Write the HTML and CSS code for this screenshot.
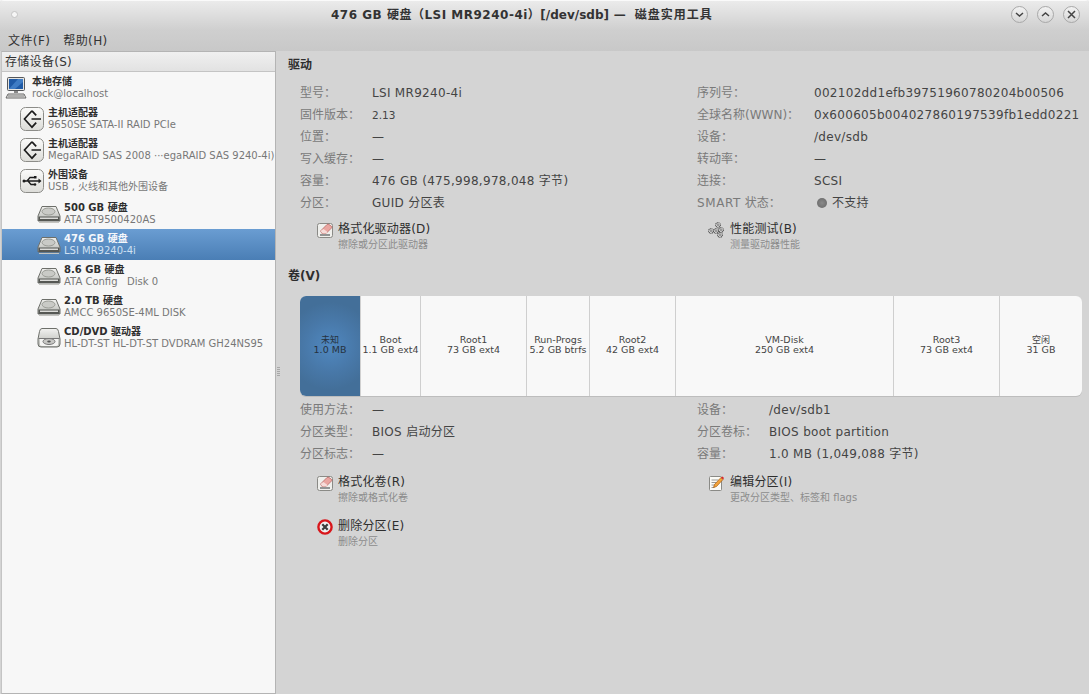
FILE: index.html
```html
<!DOCTYPE html>
<html lang="zh-CN">
<head>
    <meta charset="UTF-8">
    <title>磁盘实用工具</title>
    <link rel="stylesheet" href="styles.css">
</head>
<body>
    <svg class="defs" width="0" height="0">
        <defs>
            <linearGradient id="hdTop" x1="0" y1="0" x2="0" y2="1">
                <stop offset="0" stop-color="#f2f2f0"/>
                <stop offset="1" stop-color="#b4b6b1"/>
            </linearGradient>
            <linearGradient id="chipBg" x1="0" y1="0" x2="0" y2="1">
                <stop offset="0" stop-color="#fbfbfa"/>
                <stop offset="1" stop-color="#dcdcd8"/>
            </linearGradient>
            <symbol id="hdd" viewBox="0 0 24 20">
                <path d="M5 2.500h14l4 9.500v5H1v-5z" fill="url(#hdTop)" stroke="#6d6f6a"/>
                <ellipse cx="11.500" cy="7.500" rx="6.500" ry="3.500" fill="#c9cac6" stroke="#9a9c96"/>
                <rect x="1.500" y="12.500" width="21" height="4.500" fill="#555753"/>
                <rect x="3" y="13.500" width="18" height="1.500" fill="#dcdcd9"/>
                <path d="M2 18.500h20" stroke="#c4c4c0"/>
            </symbol>
            <symbol id="optical" viewBox="0 0 24 24">
                <path d="M5 2.500h14q2 0 2.500 3L23 13v5q0 3-3 3H4q-3 0-3-3v-5l1.500-7.500Q3 2.500 5 2.500z" fill="url(#hdTop)" stroke="#6d6f6a"/>
                <path d="M1.500 12.500h21" stroke="#777"/>
                <path d="M3 13h18v6q0 1-2 1H5q-2 0-2-1z" fill="#f4f4f2"/>
                <ellipse cx="12" cy="15.500" rx="6" ry="3" fill="#c8c8c5" stroke="#777"/>
                <ellipse cx="12" cy="15.500" rx="1.800" ry="1" fill="#555"/>
            </symbol>
            <symbol id="hba" viewBox="0 0 24 24">
                <rect x=".5" y=".5" width="23" height="23" rx="5" fill="url(#chipBg)" stroke="#8c8c88"/>
                <path d="M12 3.800 4.500 12l7.500 8.200 4.200-4.500M16.200 8.300 12 3.800" fill="none" stroke="#1c1c1c" stroke-width="1.700"/>
                <path d="M11.500 12H21" stroke="#1c1c1c" stroke-width="1.700"/>
            </symbol>
            <symbol id="usb" viewBox="0 0 24 24">
                <rect x=".5" y=".5" width="23" height="23" rx="5" fill="url(#chipBg)" stroke="#8c8c88"/>
                <path d="M3 12h17M7 12l3-3.500h4M8 12l3 3.500h3" fill="none" stroke="#1c1c1c" stroke-width="1.300"/>
                <circle cx="4" cy="12" r="1.500" fill="#1c1c1c"/>
                <path d="M18.500 9.500l3 2.500-3 2.500z" fill="#1c1c1c"/>
                <rect x="14" y="7" width="2.500" height="2.500" fill="#1c1c1c"/>
                <circle cx="15" cy="15.500" r="1.300" fill="#1c1c1c"/>
            </symbol>
            <symbol id="eraser" viewBox="0 0 16 16">
                <rect x=".5" y="1.500" width="15" height="14" rx="2" fill="#efefec" stroke="#8a8a86"/>
                <path d="M3.500 9 10 2.500q1-.8 2 0l2.500 1.800q.8.800 0 1.700L9 11.500H5z" fill="#eaa5a0" stroke="#b96a66" stroke-width=".8"/>
                <path d="M3.500 9 5.500 11.500H9l1.500-1.500-4-3z" fill="#f6dcd9"/>
                <path d="M3 13h10" stroke="#55575a" stroke-width="1.200"/>
            </symbol>
            <symbol id="gear" viewBox="0 0 6 6">
                <circle cx="3" cy="3" r="2.300" fill="#f2f2f2" stroke="#444" stroke-width="1.100" stroke-dasharray="1 .45"/>
                <circle cx="3" cy="3" r=".9" fill="#d4d4d4" stroke="#444" stroke-width=".5"/>
            </symbol>
        </defs>
    </svg>

    <div class="window">
        <header class="titlebar">
            <span class="app-dot"></span>
            <h1 class="title">476 GB 硬盘（LSI MR9240-4i）<span class="title-path">[/dev/sdb]</span> — <span class="title-app">磁盘实用工具</span></h1>
            <div class="wm-buttons">
                <button class="wm-btn"><svg width="9" height="9" viewBox="0 0 9 9"><path d="M1 3l3.500 3L8 3" fill="none" stroke="#444" stroke-width="1.500"/></svg></button>
                <button class="wm-btn"><svg width="9" height="9" viewBox="0 0 9 9"><path d="M1 6l3.500-3L8 6" fill="none" stroke="#444" stroke-width="1.500"/></svg></button>
                <button class="wm-btn"><svg width="9" height="9" viewBox="0 0 9 9"><path d="M1 1l7 7M8 1 1 8" fill="none" stroke="#444" stroke-width="1.500"/></svg></button>
            </div>
        </header>

        <nav class="menubar">
            <span>文件(F)</span>
            <span>帮助(H)</span>
        </nav>

        <div class="content">
            <aside class="sidebar">
                <div class="sidebar-head">存储设备(S)</div>
                <ul class="tree">
                    <li class="tree-row level-0">
                        <svg class="icon-computer" width="22" height="24" viewBox="0 0 22 24">
                            <rect x="2.500" y="1.500" width="17" height="13" rx="1" fill="#e4e4e2" stroke="#55575a"/>
                            <rect x="4" y="3" width="14" height="10" fill="#1f5aa6"/>
                            <path d="M4 13l9-10h5v3l-8 7z" fill="#3f7cc4"/>
                            <path d="M9 15h4v2H9z" fill="#888"/>
                            <path d="M3 18h16l2 4H1z" fill="#e8e8e6" stroke="#666"/>
                            <path d="M3 20h16" stroke="#777"/>
                        </svg>
                        <div class="tree-text"><strong>本地存储</strong><span>rock@localhost</span></div>
                    </li>
                    <li class="tree-row level-1">
                        <svg class="icon-chip" width="24" height="24"><use href="#hba"/></svg>
                        <div class="tree-text"><strong>主机适配器</strong><span>9650SE SATA-II RAID PCIe</span></div>
                    </li>
                    <li class="tree-row level-1">
                        <svg class="icon-chip" width="24" height="24"><use href="#hba"/></svg>
                        <div class="tree-text"><strong>主机适配器</strong><span>MegaRAID SAS 2008 ···egaRAID SAS 9240-4i)</span></div>
                    </li>
                    <li class="tree-row level-1">
                        <svg class="icon-chip" width="24" height="24"><use href="#usb"/></svg>
                        <div class="tree-text"><strong>外围设备</strong><span>USB , 火线和其他外围设备</span></div>
                    </li>
                    <li class="tree-row level-2 first-drive">
                        <svg class="icon-drive" width="24" height="20"><use href="#hdd"/></svg>
                        <div class="tree-text"><strong>500 GB 硬盘</strong><span>ATA ST9500420AS</span></div>
                    </li>
                    <li class="tree-row level-2 selected">
                        <svg class="icon-drive" width="24" height="20"><use href="#hdd"/></svg>
                        <div class="tree-text"><strong>476 GB 硬盘</strong><span>LSI MR9240-4i</span></div>
                    </li>
                    <li class="tree-row level-2">
                        <svg class="icon-drive" width="24" height="20"><use href="#hdd"/></svg>
                        <div class="tree-text"><strong>8.6 GB 硬盘</strong><span>ATA Config&nbsp;&nbsp; Disk 0</span></div>
                    </li>
                    <li class="tree-row level-2">
                        <svg class="icon-drive" width="24" height="20"><use href="#hdd"/></svg>
                        <div class="tree-text"><strong>2.0 TB 硬盘</strong><span>AMCC 9650SE-4ML DISK</span></div>
                    </li>
                    <li class="tree-row level-2">
                        <svg class="icon-drive" width="24" height="24"><use href="#optical"/></svg>
                        <div class="tree-text"><strong>CD/DVD 驱动器</strong><span>HL-DT-ST HL-DT-ST DVDRAM GH24NS95</span></div>
                    </li>
                </ul>
            </aside>

            <main class="details">
                <span class="sash"></span>
                <h2 class="section-title">驱动</h2>
                <div class="two-col drive-info">
                    <dl class="props">
                        <dt>型号：</dt><dd>LSI MR9240-4i</dd>
                        <dt>固件版本：</dt><dd class="small">2.13</dd>
                        <dt>位置：</dt><dd>—</dd>
                        <dt>写入缓存：</dt><dd>—</dd>
                        <dt>容量：</dt><dd>476 GB (475,998,978,048 字节)</dd>
                        <dt>分区：</dt><dd>GUID 分区表</dd>
                    </dl>
                    <dl class="props props-wide">
                        <dt>序列号：</dt><dd>002102dd1efb39751960780204b00506</dd>
                        <dt>全球名称(WWN)：</dt><dd>0x600605b004027860197539fb1edd0221</dd>
                        <dt>设备：</dt><dd>/dev/sdb</dd>
                        <dt>转动率：</dt><dd>—</dd>
                        <dt>连接：</dt><dd>SCSI</dd>
                        <dt><span class="latin">SMART</span> 状态：</dt><dd class="smart"><i class="smart-dot"></i>不支持</dd>
                    </dl>
                </div>
                <div class="two-col actions drive-actions">
                    <a class="action">
                        <svg width="16" height="16"><use href="#eraser"/></svg>
                        <div><b>格式化驱动器(D)</b><small>擦除或分区此驱动器</small></div>
                    </a>
                    <a class="action action-right">
                        <svg width="16" height="16" viewBox="0 0 16 16">
                            <use href="#gear" x="7" y="0" width="6" height="6"/>
                            <use href="#gear" x="10" y="5" width="6" height="6"/>
                            <use href="#gear" x="0" y="6" width="6" height="6"/>
                            <use href="#gear" x="5" y="6" width="6" height="6"/>
                            <use href="#gear" x="9" y="10" width="6" height="6"/>
                        </svg>
                        <div><b>性能测试(B)</b><small>测量驱动器性能</small></div>
                    </a>
                </div>

                <h2 class="section-title volumes-title">卷(V)</h2>
                <div class="volume-bar">
                    <div class="vol vol-active" style="width:60px"><span class="cjk-small">未知</span><span>1.0 MB</span></div>
                    <div class="vol" style="width:59px"><span>Boot</span><span>1.1 GB ext4</span></div>
                    <div class="vol" style="width:105px"><span>Root1</span><span>73 GB ext4</span></div>
                    <div class="vol" style="width:62px"><span>Run-Progs</span><span>5.2 GB btrfs</span></div>
                    <div class="vol" style="width:85px"><span>Root2</span><span>42 GB ext4</span></div>
                    <div class="vol" style="width:217px"><span>VM-Disk</span><span>250 GB ext4</span></div>
                    <div class="vol" style="width:105px"><span>Root3</span><span>73 GB ext4</span></div>
                    <div class="vol vol-last"><span class="cjk-small">空闲</span><span>31 GB</span></div>
                </div>
                <div class="two-col volume-info">
                    <dl class="props">
                        <dt>使用方法：</dt><dd>—</dd>
                        <dt>分区类型：</dt><dd>BIOS 启动分区</dd>
                        <dt>分区标志：</dt><dd>—</dd>
                    </dl>
                    <dl class="props props-narrow">
                        <dt>设备：</dt><dd>/dev/sdb1</dd>
                        <dt>分区卷标：</dt><dd>BIOS boot partition</dd>
                        <dt>容量：</dt><dd>1.0 MB (1,049,088 字节)</dd>
                    </dl>
                </div>
                <div class="two-col actions volume-actions">
                    <div class="action-stack">
                        <a class="action">
                            <svg width="16" height="16"><use href="#eraser"/></svg>
                            <div><b>格式化卷(R)</b><small>擦除或格式化卷</small></div>
                        </a>
                        <a class="action">
                            <svg width="16" height="16" viewBox="0 0 16 16">
                                <circle cx="8" cy="8" r="6.600" fill="#f0f0f0" stroke="#d8161b" stroke-width="2.400"/>
                                <path d="M5.300 5.300l5.400 5.400M10.700 5.300l-5.400 5.400" stroke="#3c3c3c" stroke-width="2.200"/>
                            </svg>
                            <div><b>删除分区(E)</b><small>删除分区</small></div>
                        </a>
                    </div>
                    <a class="action action-right">
                        <svg width="16" height="16" viewBox="0 0 16 16">
                            <rect x="1.500" y="1.500" width="12" height="14" rx="1" fill="#fbfbf6" stroke="#8a8a86"/>
                            <path d="M3.500 5h7M3.500 7.500h5M3.500 10h4M3.500 12.500h3" stroke="#9a9a96"/>
                            <path d="M5.500 12.500l1-3L13 2.500l2 2-6.500 7z" fill="#f2a33a" stroke="#a85f10" stroke-width=".7"/>
                            <path d="M13 2.500l2 2 1-1.500-1.500-1.500z" fill="#d8262b"/>
                        </svg>
                        <div><b>编辑分区(I)</b><small>更改分区类型、标签和 flags</small></div>
                    </a>
                </div>
            </main>
        </div>
    </div>
</body>
</html>
```

FILE: styles.css
```css
/* Page and window frame */
html, body {
    margin: 0;
    height: 100%;
    overflow: hidden;
    background: #f4f4f4;
}
body {
    font-family: "DejaVu Sans", "Noto Sans CJK SC", sans-serif;
    font-size: 12px;
    color: #3b3b3b;
}
.defs {
    display: block;
    height: 0;
}
.window {
    width: 1089px;
    height: 694px;
    display: flex;
    flex-direction: column;
    background: #d4d4d4;
    border-radius: 4px 4px 0 0;
    overflow: hidden;
}

/* Title bar */
.titlebar {
    height: 30px;
    flex: none;
    display: flex;
    align-items: center;
    position: relative;
    background: linear-gradient(#ececec, #cfcfcf);
    box-shadow: inset 0 1px 0 #fafafa;
}
.app-dot {
    width: 7px;
    height: 7px;
    margin: 0 0 2px 11px;
    border-radius: 50%;
    background: #f6f6f6;
    border: 1px solid #c4c4c4;
    box-sizing: border-box;
}
.title {
    position: absolute;
    left: 331px;
    top: 7px;
    margin: 0;
    font-size: 12px;
    line-height: 16px;
    font-weight: bold;
    letter-spacing: .5px;
    color: #333;
    white-space: nowrap;
}
.title-path {
    letter-spacing: 0;
}
.title-app {
    padding-left: 4px;
    letter-spacing: 1px;
}
.wm-buttons {
    margin: 0 9px 2px auto;
    display: flex;
    gap: 9px;
}
.wm-btn {
    width: 17px;
    height: 17px;
    padding: 0;
    display: flex;
    align-items: center;
    justify-content: center;
    border: 1px solid #a8a8a8;
    border-radius: 50%;
    background: linear-gradient(#f2f2f2, #d6d6d6);
}

/* Menu */
.menubar {
    height: 21px;
    flex: none;
    display: flex;
    align-items: center;
    gap: 13px;
    padding-left: 8px;
    background: linear-gradient(#cfcfcf, #c8c8c8);
    color: #333;
    line-height: 18px;
    letter-spacing: .4px;
}

/* Sidebar */
.content {
    flex: 1;
    display: flex;
    min-height: 0;
    position: relative;
}
.sidebar {
    width: 273px;
    margin-left: 1px;
    flex: none;
    background: #f7f7f7;
    border: 1px solid #b4b4b4;
    border-left: 1px solid #c4c4c4;
}
.sidebar-head {
    height: 19px;
    line-height: 21px;
    padding-left: 3px;
    letter-spacing: .3px;
    background: linear-gradient(#f0f0f0, #e2e2e2);
    border-bottom: 1px solid #c4c4c4;
    color: #333;
}
.tree {
    list-style: none;
    margin: 0;
    padding: 0;
}
.tree-row {
    height: 31px;
    display: flex;
    align-items: center;
    white-space: nowrap;
    font-size: 10px;
}
.tree-text {
    display: flex;
    flex-direction: column;
    line-height: 12px;
}
.tree-text strong {
    color: #2e2e2e;
}
.tree-text span {
    color: #777;
}
.level-0 {
    padding-left: 3px;
}
.level-0 svg {
    margin-right: 5px;
}
.level-1 {
    padding-left: 18px;
}
.level-1 svg {
    margin-right: 4px;
}
.level-2 {
    padding-left: 35px;
}
.level-2 svg {
    margin-right: 3px;
}
.first-drive {
    margin-top: 2px;
}
.selected {
    background: linear-gradient(#6a9dd2, #4a7eb5);
}
.selected strong {
    color: #f4f7fb;
}
.selected span {
    color: #cfe0f2;
}

/* Right side */
.details {
    flex: 1;
    min-width: 0;
    padding: 5px 0 0 12px;
}
.sash {
    position: absolute;
    left: 277px;
    top: 316px;
    width: 3px;
    height: 9px;
    background: repeating-linear-gradient(#a8a8a8 0 1px, transparent 1px 2px);
}
.section-title {
    margin: 0;
    font-size: 12px;
    line-height: 18px;
    font-weight: bold;
    color: #2e2e2e;
}
.two-col {
    display: flex;
    padding-left: 12px;
}
.two-col > * {
    flex: none;
    width: 397px;
    margin: 0;
    box-sizing: border-box;
}
.drive-info {
    margin-top: 8px;
}
.props {
    display: grid;
    grid-template-columns: 72px 1fr;
    grid-auto-rows: 22px;
    line-height: 22px;
    white-space: nowrap;
}
.props-wide {
    grid-template-columns: 117px 1fr;
}
.props-narrow {
    grid-template-columns: 72px 1fr;
}
.props dt {
    color: #7a7a7a;
}
.props dd {
    margin: 0;
    color: #444;
    letter-spacing: .3px;
}
.props dd.small {
    font-size: 10.500px;
    letter-spacing: 0;
}
.latin {
    letter-spacing: .6px;
}
.smart {
    display: flex;
    align-items: center;
}
.smart-dot {
    width: 10px;
    height: 10px;
    margin: 0 5px 0 3px;
    border-radius: 50%;
    background: radial-gradient(#8a8a8a, #666);
}

/* Action links */
.actions {
    white-space: nowrap;
}
.action {
    display: flex;
    align-items: flex-start;
    gap: 5px;
    padding-left: 17px;
    color: #2e2e2e;
}
.action svg {
    flex: none;
    margin-top: 1px;
}
.action b,
.action small {
    display: block;
    font-weight: normal;
}
.action b {
    line-height: 17px;
    letter-spacing: .2px;
}
.action small {
    font-size: 10px;
    line-height: 14px;
    color: #8c8c8c;
}
.action-right {
    padding-left: 11px;
    gap: 6px;
}
.drive-actions {
    margin-top: 7px;
}
.volumes-title {
    margin-top: 15px;
}
.action-stack {
    display: flex;
    flex-direction: column;
    gap: 13px;
}
.volume-actions {
    margin-top: 9px;
}

/* Partition strip */
.volume-bar {
    display: flex;
    height: 100px;
    margin: 11px 7px 0 12px;
    background: #f8f8f8;
    border-radius: 6px;
    overflow: hidden;
    box-shadow: 0 1px 0 #bdbdbd;
}
.vol {
    flex: none;
    display: flex;
    flex-direction: column;
    align-items: center;
    justify-content: center;
    padding-bottom: 2px;
    box-sizing: content-box;
    border-right: 1px solid #cfcfcf;
    font-size: 9.500px;
    line-height: 10px;
    color: #444;
    white-space: nowrap;
}
.vol-active {
    background: radial-gradient(circle, #5088c0 0, #4878a8 45%, #436f99 75%);
    color: #26323e;
    border-right-color: #d0d0d0;
}
.vol-last {
    flex: 1;
    border-right: 0;
}
.cjk-small {
    font-size: 9px;
}
.volume-info {
    margin-top: 3px;
}
```
